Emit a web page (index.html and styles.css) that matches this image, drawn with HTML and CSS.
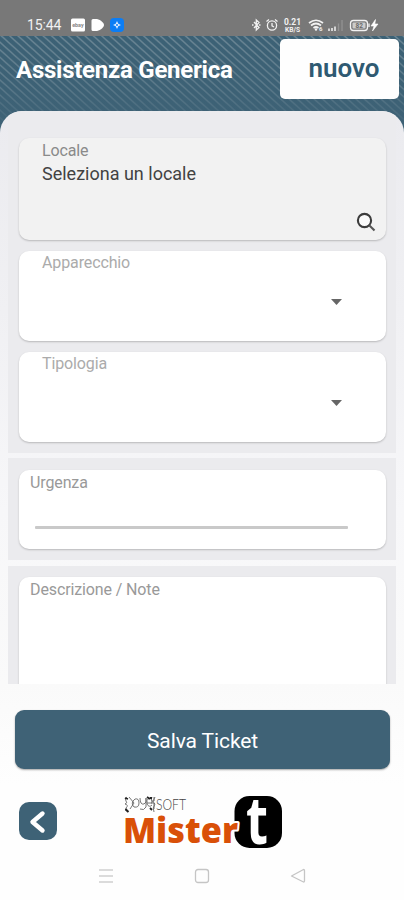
FILE: index.html
```html
<!DOCTYPE html>
<html lang="it">
<head>
<meta charset="utf-8">
<title>Assistenza Generica</title>
<link rel="stylesheet" href="styles.css">
</head>
<body>
<div class="phone">
  <div class="status">
    <span class="clock">15:44</span>
    <svg class="status-left" width="56" height="16" viewBox="0 0 56 16">
      <rect x="1" y="1.500" width="14" height="13" rx="1.500" fill="#fff"/>
      <text x="2.200" y="10" font-family="Roboto, sans-serif" font-size="5.500" font-weight="700" fill="#888" textLength="11.500" lengthAdjust="spacingAndGlyphs">ebay</text>
      <path d="M23 2h4c4 1 7 4 7 6s-3 5-7 6h-4q-1.500 0-1.500-1.500v-9Q21.500 2 23 2z" fill="#fff"/>
      <rect x="40" y="1" width="14" height="14" rx="4" fill="#0b7df5"/>
      <path d="M47 4l1.300 2.700L51 8l-2.700 1.300L47 12l-1.300-2.700L43 8l2.700-1.300z" fill="#dcebff"/><circle cx="47" cy="8" r="1" fill="#0b7df5"/>
    </svg>
    <svg class="status-right" width="132" height="16" viewBox="0 0 132 16" fill="none" stroke="#f2f2f2" stroke-width="1.300">
      <path d="M4 5l5 5.500-2.700 2.500V3L9 5.500 4 11M2 8h1.500M9 8h1.500"/>
      <circle cx="22" cy="8.500" r="4.600"/><path d="M22 6v2.800l2 1.200M16.500 4.500l2.500-2M27.500 4.500l-2.500-2"/>
      <g fill="#f2f2f2" stroke="none" font-family="Roboto, sans-serif" font-weight="700">
        <text x="34" y="8" font-size="8.500" textLength="17" lengthAdjust="spacingAndGlyphs">0.21</text>
        <text x="35" y="14.500" font-size="6.500" textLength="15" lengthAdjust="spacingAndGlyphs">KB/S</text>
        <text x="69" y="14" font-size="6">6</text>
      </g>
      <path d="M59 6q7-5.500 14 0M61 8.500q5-4 10 0M63.500 11q2.500-2 5 0" stroke-width="1.700"/><circle cx="66" cy="12.500" r="1.200" fill="#f2f2f2" stroke="none"/>
      <path d="M79 14v-2.500M82 14v-3M85 14V9.500" stroke-width="1.500"/><path d="M88.500 14V6.500M92 14V3" stroke="#929292"/>
      <rect x="100.500" y="3.500" width="17" height="10" rx="3"/><path d="M119 6.500v3.500"/>
      <rect x="102.500" y="5.500" width="13" height="6" rx="1" fill="#ccc" stroke="none"/>
      <text x="105.500" y="10.900" font-family="Roboto, sans-serif" font-size="6.500" font-weight="700" fill="#686868" stroke="none">82</text>
      <path d="M125.500 2.500L121 9h3l-1.500 5 5.500-7h-3.200z" fill="#fff" stroke="#fff" stroke-width="0.600"/>
    </svg>
  </div>
  <header class="header">
    <h1 class="title">Assistenza Generica</h1>
    <button class="new">nuovo</button>
  </header>
  <main class="sheet">
    <section class="group group-first">
      <div class="card card-locale">
        <span class="label label-dark">Locale</span>
        <span class="value">Seleziona un locale</span>
        <svg class="search" width="20" height="20" viewBox="0 0 20 20"><circle cx="8.500" cy="8.500" r="6.600" fill="#fafafa" stroke="#3c3c3c" stroke-width="2.100"/><path d="M13.200 13.200l5.300 5.300" stroke="#555" stroke-width="2.100"/></svg>
      </div>
      <div class="card card-select">
        <span class="label">Apparecchio</span>
        <svg class="caret" width="11" height="6" viewBox="0 0 11 6"><path d="M0 0h11L5.500 6z" fill="#666"/></svg>
      </div>
      <div class="card card-select">
        <span class="label">Tipologia</span>
        <svg class="caret" width="11" height="6" viewBox="0 0 11 6"><path d="M0 0h11L5.500 6z" fill="#666"/></svg>
      </div>
    </section>
    <section class="group group-urgency">
      <div class="card card-urgency"><span class="label label-mid">Urgenza</span><div class="line"></div></div>
    </section>
    <section class="group group-notes">
      <div class="card card-notes"><span class="label label-mid">Descrizione / Note</span></div>
    </section>
  </main>
  <div class="actions"><button class="save">Salva Ticket</button></div>
  <footer class="brandbar">
    <button class="back" aria-label="Indietro"><svg width="38" height="38" viewBox="0 0 38 38"><path d="M23.500 11.500L13.500 20l10 8.500" fill="none" stroke="#fff" stroke-width="4.400" stroke-linecap="round" stroke-linejoin="round"/></svg></button>
    <svg class="logo" width="164" height="58" viewBox="0 0 164 58">
      <g fill="none" stroke="#666" stroke-width="0.900">
        <path d="M6 4q-3 1-1 4 2 2-1 3 4 1 1 4-2 3 2 4M8 4l5 6-4 6M14 6q-5 4-1 8 5 1 5-4 0-5-4-4M19 5q0 7 4 6 3-1 2-6v9q-2 4-6 2M26 10h5q0-5-3-5-3 2-2 6 2 4 5 1M31 4q-2 2 1 5M33 4v4M30 10h3v6M34 4q-3 5 0 7-3 4-1 8"/>
      </g>
      <path d="M4.500 16l3 3M26 4l3 2M29 5h2M4 5l3 1M29 15l2 2" stroke="#222" stroke-width="1.800"/>
      <text x="35" y="16.500" font-family="Lato, sans-serif" font-size="16.500" font-weight="300" fill="#444" textLength="30" lengthAdjust="spacingAndGlyphs">SOFT</text>
      <rect x="113.500" y="3" width="47.500" height="52" rx="15" fill="#000"/>
      <text class="mister" x="2" y="50" textLength="115" lengthAdjust="spacingAndGlyphs">Mister</text>
      <text class="tee" x="125" y="50.500" textLength="22" lengthAdjust="spacingAndGlyphs">t</text>
    </svg>
  </footer>
  <nav class="nav">
    <svg width="16" height="16" viewBox="0 0 16 16"><path d="M1 2h14M1 8h14M1 14h14" stroke="#d0d0d0" stroke-width="1.600"/></svg>
    <svg width="16" height="16" viewBox="0 0 16 16"><rect x="1.500" y="1.500" width="13" height="13" rx="2.500" fill="none" stroke="#c5c5c5" stroke-width="1.300"/></svg>
    <svg width="16" height="16" viewBox="0 0 16 16"><path d="M13.500 1.500L1.500 8l12 6q1 0 1-1V2.500q0-1-1-1z" fill="none" stroke="#c5c5c5" stroke-width="1.300" stroke-linejoin="round"/></svg>
  </nav>
</div>
</body>
</html>
```

FILE: styles.css
```css
* { box-sizing: border-box; }
body { margin: 0; font-family: Roboto, sans-serif; background: #fefefe; }
button { border: 0; padding: 0; font-family: inherit; }
.phone {
  width: 404px;
  height: 900px;
  display: flex;
  flex-direction: column;
  overflow: hidden;
  background:
    linear-gradient(to bottom, rgba(62, 98, 118, 0.1) 0, rgba(62, 98, 118, 0.4) 50px, #3e6276 95px) 0 36px / 100% 110px no-repeat,
    repeating-linear-gradient(42deg, #3c6175 0, #3c6175 3px, #6f8997 4.100px, #6f8997 4.500px, #3c6175 5.600px) 0 36px / 100% 110px no-repeat,
    #fefefe;
}
.status {
  flex: none;
  height: 36px;
  padding: 17px 22px 0 27px;
  display: flex;
  align-items: flex-start;
  background: #787878;
}
.clock { width: 43px; font-size: 14px; line-height: 17px; color: #f2f2f2; letter-spacing: -0.1px; }
.status-left { flex: none; }
.status-right { flex: none; margin-left: auto; }
.header {
  flex: none;
  height: 75px;
  padding: 3px 5px 0 16px;
  display: flex;
  justify-content: space-between;
  align-items: flex-start;
}
.title { margin: 17px 0 0; font-size: 24px; line-height: 28px; font-weight: 700; color: #fff; white-space: nowrap; letter-spacing: -0.25px; }
.new {
  width: 119px;
  height: 60px;
  padding: 0 0 3px 9px;
  border-radius: 5px;
  background: #fefefe;
  color: #2f5a72;
  font-size: 26px;
  font-weight: 600;
}
.sheet {
  flex: none;
  height: 573px;
  overflow: hidden;
  border-radius: 22px 22px 0 0;
  padding: 0 8px;
  background: linear-gradient(#ebebef 0, #f0f0f3 200px, #f7f7f9 400px, #fafafa 573px);
}
.group { background: #ebebee; padding: 0 10px 0 11px; }
.group-first {
  height: 342px;
  padding-top: 27px;
  display: flex;
  flex-direction: column;
  gap: 11px;
}
.group-urgency { margin-top: 5px; height: 102px; padding-top: 12px; }
.group-notes { margin-top: 6px; height: 118px; padding-top: 11px; }
.card {
  border-radius: 10px;
  background: #fff;
  box-shadow: 0 1px 2px rgba(0, 0, 0, 0.22);
  display: flex;
  flex-direction: column;
}
.card-locale { height: 102px; padding: 3px 10px 8px 23px; background: #f2f2f2; }
.card-select { height: 90px; padding: 2px 44px 0 23px; }
.card-urgency { height: 79px; padding: 3px 38px 0 11px; }
.card-notes { height: 140px; padding: 3px 11px; }
.label { font-size: 16px; line-height: 19px; color: #ababab; white-space: nowrap; letter-spacing: -0.12px; }
.label-dark { color: #8a8a8a; }
.label-mid { color: #999; }
.value { margin-top: 3px; font-size: 18px; line-height: 22px; color: #424242; }
.search { margin-top: auto; align-self: flex-end; }
.caret { margin-top: 27px; align-self: flex-end; margin-left: auto; }
.line { margin: 34px 0 0 5px; height: 3px; border-radius: 1px; background: #c9c9c9; }
.actions { flex: none; height: 100px; padding: 26px 14px 0 15px; background: linear-gradient(#fafafa, #fefefe); }
.save {
  display: block;
  width: 100%;
  height: 59px;
  border-radius: 9px;
  background: #3f6276;
  color: #fff;
  font-size: 21px;
  font-weight: 400;
  padding-top: 2px;
  letter-spacing: -0.1px;
  box-shadow: 0 1px 2px rgba(0, 0, 0, 0.35);
}
.brandbar { flex: none; height: 80px; padding: 9px 0 0 19px; display: flex; align-items: flex-start; }
.back { width: 38px; height: 38px; margin-top: 9px; border-radius: 10px; background: #3e6276; }
.back svg { display: block; }
.logo { margin-left: 64px; overflow: visible; }
.mister {
  font-family: "Open Sans", sans-serif;
  font-size: 36px;
  font-weight: 800;
  fill: #d95008;
  stroke: #fff;
  stroke-width: 4px;
  stroke-linejoin: round;
  paint-order: stroke;
}
.tee { font-family: "Open Sans", sans-serif; font-size: 67px; font-weight: 700; fill: #fff; }
.nav { flex: none; padding: 4px 98px; display: flex; justify-content: space-between; }
```
